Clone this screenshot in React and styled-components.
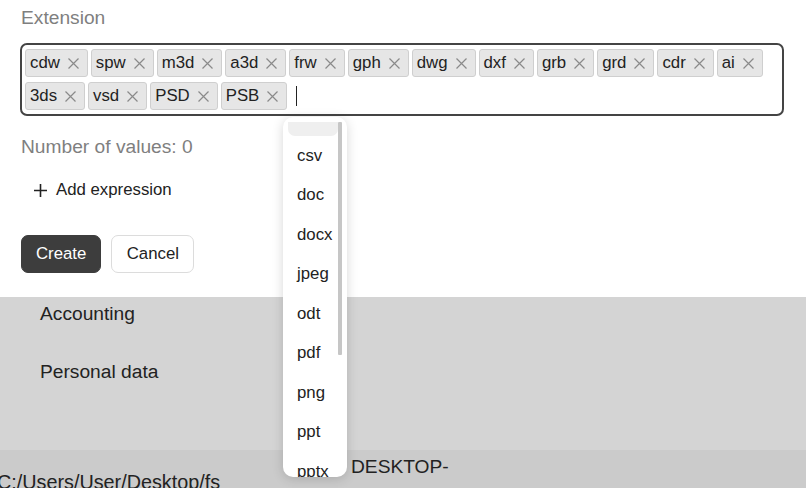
import React from "react";
import styled, { createGlobalStyle } from "styled-components";

const Global = createGlobalStyle`
  html, body { margin: 0; padding: 0; background: #fff; }
  body { font-family: "Liberation Sans", Arial, sans-serif; width: 806px; height: 488px; overflow: hidden; }
  * { box-sizing: border-box; }
`;

const Page = styled.div`
  position: relative;
  width: 806px;
  height: 488px;
  overflow: hidden;
`;

const Form = styled.section`
  height: 297px;
  background: #fff;
  padding: 7px 22px 0 20px;
  display: flex;
  flex-direction: column;
`;

const Label = styled.div`
  font-size: 19.2px;
  line-height: 22px;
  color: #7f7f7f;
  padding-left: 1px;
  margin-bottom: 14px;
`;

const TagBox = styled.div`
  border: 2px solid #444;
  border-radius: 7px;
  padding: 4px 3px 4px 3px;
  display: flex;
  flex-wrap: wrap;
  row-gap: 5px;
  column-gap: 3px;
  align-items: center;
`;

const Tag = styled.span`
  display: inline-flex;
  align-items: center;
  height: 28px;
  padding: 0 8px 0 4px;
  background: #e6e6e6;
  border: 1px solid #cfcfcf;
  border-radius: 3px;
  font-size: 16.8px;
  color: #222;
  gap: 8px;
`;

const Cursor = styled.span`
  display: inline-block;
  width: 1px;
  height: 20px;
  background: #222;
  margin-left: 6px;
`;

const Count = styled.div`
  font-size: 19.2px;
  line-height: 22px;
  color: #7f7f7f;
  margin-top: 20px;
  padding-left: 1px;
`;

const AddLink = styled.div`
  display: flex;
  align-items: center;
  gap: 9px;
  font-size: 16.8px;
  line-height: 20px;
  color: #222;
  margin-top: 22px;
  padding-left: 14px;
`;

const Buttons = styled.div`
  display: flex;
  gap: 10px;
  margin-top: 35px;
  padding-left: 1px;
`;

const Button = styled.button`
  height: 38px;
  padding: 0 14px;
  border-radius: 7px;
  font-family: inherit;
  font-size: 16.8px;
  background: ${(p) => (p.$primary ? "#3d3d3d" : "#fff")};
  color: ${(p) => (p.$primary ? "#fff" : "#222")};
  border: 1px solid ${(p) => (p.$primary ? "#3d3d3d" : "#dcdcdc")};
  min-width: ${(p) => p.$w}px;
`;

const Lower = styled.section`
  background: #d4d4d4;
  height: 153px;
  padding: 6px 0 0 40px;
  display: flex;
  flex-direction: column;
`;

const Row = styled.div`
  font-size: 19.2px;
  line-height: 22px;
  color: #222;
  margin-bottom: ${(p) => p.$mb}px;
`;

const Footer = styled.section`
  background: #cbcbcb;
  height: 38px;
  display: flex;
  font-size: 19.2px;
  line-height: 22px;
  color: #222;
`;

const PathCell = styled.div`
  width: 354px;
  margin-left: -3px;
  padding-top: 21px;
  white-space: nowrap;
  font-size: 19.8px;
`;

const HostCell = styled.div`
  padding-top: 6px;
`;

const Dropdown = styled.div`
  position: absolute;
  left: 283px;
  top: 117px;
  width: 64px;
  height: 360px;
  background: #fff;
  border-radius: 10px;
  box-shadow: 0 2px 12px rgba(0, 0, 0, 0.16);
  overflow: hidden;
`;

const Viewport = styled.div`
  position: absolute;
  left: 5px;
  top: 5px;
  right: 9px;
  bottom: 0;
  overflow: hidden;
`;

const List = styled.ul`
  list-style: none;
  margin: -25.5px 0 0 0;
  padding: 0;
`;

const Item = styled.li`
  height: 39.5px;
  display: flex;
  align-items: center;
  padding-left: 9px;
  font-size: 16.8px;
  color: #222;
  border-radius: 7px;
  background: ${(p) => (p.$active ? "#efefef" : "transparent")};
`;

const Thumb = styled.div`
  position: absolute;
  left: 55px;
  top: 5px;
  width: 4px;
  height: 233px;
  background: #c6c6c6;
  border-radius: 1px;
`;

const Close = () => (
  <svg width="11" height="11" viewBox="0 0 11 11" aria-hidden="true">
    <path d="M0.5 0.5 L10.5 10.5 M10.5 0.5 L0.5 10.5" stroke="#8a8a8a" strokeWidth="1.2" fill="none" />
  </svg>
);

const Plus = () => (
  <svg width="13" height="13" viewBox="0 0 13 13" aria-hidden="true">
    <path d="M6.5 0 V13 M0 6.5 H13" stroke="#222" strokeWidth="1.6" fill="none" />
  </svg>
);

const tags = ["cdw", "spw", "m3d", "a3d", "frw", "gph", "dwg", "dxf", "grb", "grd", "cdr", "ai", "3ds", "vsd", "PSD", "PSB"];
const options = ["", "csv", "doc", "docx", "jpeg", "odt", "pdf", "png", "ppt", "pptx", "rtf"];

export default function App() {
  return (
    <Page>
      <Global />
      <Form>
        <Label>Extension</Label>
        <TagBox>
          {tags.map((t) => (
            <Tag key={t}>
              {t}
              <Close />
            </Tag>
          ))}
          <Cursor />
        </TagBox>
        <Count>Number of values: 0</Count>
        <AddLink>
          <Plus />
          Add expression
        </AddLink>
        <Buttons>
          <Button $primary $w={80}>Create</Button>
          <Button $w={83}>Cancel</Button>
        </Buttons>
      </Form>
      <Lower>
        <Row $mb={36}>Accounting</Row>
        <Row $mb={0}>Personal data</Row>
      </Lower>
      <Footer>
        <PathCell>C:/Users/User/Desktop/fs</PathCell>
        <HostCell>DESKTOP-</HostCell>
      </Footer>
      <Dropdown>
        <Viewport>
          <List>
            {options.map((o, i) => (
              <Item key={i} $active={i === 0}>
                {o}
              </Item>
            ))}
          </List>
        </Viewport>
        <Thumb />
      </Dropdown>
    </Page>
  );
}
